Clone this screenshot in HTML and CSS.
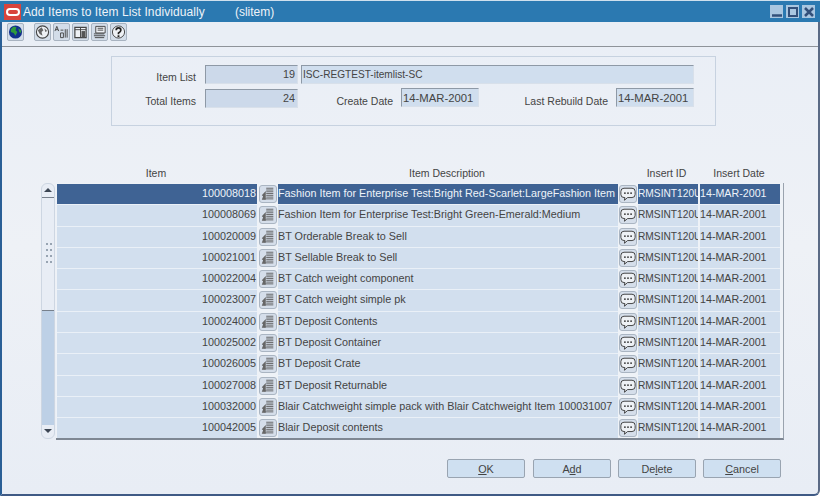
FILE: index.html
```html
<!DOCTYPE html>
<html lang="en">

<head>
  <meta charset="UTF-8">
  <title>Add Items to Item List Individually</title>
  <link rel="stylesheet" href="styles.css">
</head>

<body>
  <svg class="defs" width="0" height="0">
    <symbol id="i-detail" viewBox="0 0 18 18">
      <path d="M7 2.500h8M7 4.500h8M7 6.500h8M7 8.500h8M7 10.500h8M7 12.500h8M4 14.500h11" stroke="#5a5a5a" stroke-width="1" fill="none"/>
      <path d="M6.500 5.500L2 10.500l1.500 1L2 15.500h4.500z" fill="#666"/>
    </symbol>
    <symbol id="i-chat" viewBox="0 0 18 18">
      <path d="M4.500 2.500h9q3.500 0 3.500 3.500v3.500q0 3.500-3.500 3.500H8.500l-3.500 3 .5-3h-1Q1 13 1 9.500V6q0-3.500 3.500-3.500z" fill="#eef1f5" stroke="#333" stroke-width="1"/>
      <path d="M4.500 8h2M8 8h2M11.500 8h2" stroke="#222" stroke-width="1.600"/>
    </symbol>
  </svg>

  <div class="window">
    <div class="titlebar">
      <span class="oracle"><span class="oracle-ring"></span></span>
      <span class="title-text">Add Items to Item List Individually</span>
      <span class="title-sub">(slitem)</span>
      <div class="win-buttons">
        <span class="win-btn"><svg width="12" height="12" viewBox="0 0 12 12"><path d="M1 9.500h10" stroke="#33507a" stroke-width="2.500"/></svg></span>
        <span class="win-btn"><svg width="12" height="12" viewBox="0 0 12 12"><path d="M2 2h8v8H2z" fill="none" stroke="#33507a" stroke-width="2"/></svg></span>
        <span class="win-btn"><svg width="12" height="12" viewBox="0 0 12 12"><path d="M2 2l8 8M10 2l-8 8" stroke="#33507a" stroke-width="2.500"/></svg></span>
      </div>
    </div>

    <div class="toolbar">
      <span class="tool tool-first">
        <svg width="16" height="16" viewBox="0 0 16 16"><circle cx="8" cy="8" r="7" fill="#12308c"/><path d="M3 5l3-3 3 1-1 3 2 2-2 4-2-3-3-1zM11 4l3 2v3l-2-1z" fill="#2f9a3c"/></svg>
      </span>
      <span class="tool">
        <svg width="16" height="16" viewBox="0 0 16 16"><circle cx="8" cy="8" r="6.500" fill="#eef1f5" stroke="#444" stroke-width="1.200"/><path d="M3 6l4-3 2 3-2 2 1 4-3-2zM10 4l3 3-2 1z" fill="#666"/></svg>
      </span>
      <span class="tool">
        <svg width="16" height="16" viewBox="0 0 16 16"><path d="M1 7l2-5 2 5M1.800 5.500h2.400" stroke="#444" fill="none"/><path d="M7 9h3v5H7zM12 5v9M14 5v9M7 6h3" stroke="#444" fill="none"/></svg>
      </span>
      <span class="tool">
        <svg width="16" height="16" viewBox="0 0 16 16"><path d="M2 3h12v11H2z" fill="#eef1f5" stroke="#444" stroke-width="1.300"/><path d="M2 5.500h12M8 3v11" stroke="#444"/><path d="M9 7h4v7H9z" fill="#555"/></svg>
      </span>
      <span class="tool">
        <svg width="16" height="16" viewBox="0 0 16 16"><path d="M4 2h10v7H4z" fill="#eef1f5" stroke="#444"/><path d="M6 4h6M6 6h6M2 10h11M2 12h12M3 14h10" stroke="#444"/></svg>
      </span>
      <span class="tool">
        <svg width="16" height="16" viewBox="0 0 16 16"><circle cx="8" cy="8" r="6.500" fill="#eef1f5" stroke="#444"/><path d="M5.500 6q0-2.500 2.500-2.500T10.500 6Q10.500 7.500 8 9v1.500" fill="none" stroke="#222" stroke-width="1.800"/><path d="M7 11.500h2v2H7z" fill="#222"/></svg>
      </span>
    </div>

    <div class="content">
      <div class="panel">
        <div class="form-row">
          <label class="label label-first">Item List</label>
          <span class="field field-num">19</span>
          <span class="field field-name">ISC-REGTEST-itemlist-SC</span>
        </div>
        <div class="form-row form-row-second">
          <label class="label label-first">Total Items</label>
          <span class="field field-num">24</span>
          <label class="label label-create">Create Date</label>
          <span class="field field-date">14-MAR-2001</span>
          <label class="label label-rebuild">Last Rebuild Date</label>
          <span class="field field-date">14-MAR-2001</span>
        </div>
      </div>

      <div class="col-heads">
        <span class="head-item">Item</span>
        <span class="head-desc">Item Description</span>
        <span class="head-id">Insert ID</span>
        <span class="head-date">Insert Date</span>
      </div>

      <div class="table-area">
        <div class="scrollbar">
          <span class="scroll-btn scroll-up"></span>
          <div class="scroll-track">
            <span class="grip"></span>
          </div>
          <div class="scroll-thumb"></div>
          <span class="scroll-btn scroll-down"></span>
        </div>

        <div class="table">
          <div class="row selected">
            <span class="cell num">100008018</span>
            <span class="icon-btn"><svg><use href="#i-detail"/></svg></span>
            <span class="cell desc">Fashion Item for Enterprise Test:Bright Red-Scarlet:LargeFashion Item</span>
            <span class="icon-btn"><svg><use href="#i-chat"/></svg></span>
            <span class="cell id">RMSINT120U</span>
            <span class="cell date">14-MAR-2001</span>
          </div>
          <div class="row">
            <span class="cell num">100008069</span>
            <span class="icon-btn"><svg><use href="#i-detail"/></svg></span>
            <span class="cell desc">Fashion Item for Enterprise Test:Bright Green-Emerald:Medium</span>
            <span class="icon-btn"><svg><use href="#i-chat"/></svg></span>
            <span class="cell id">RMSINT120U</span>
            <span class="cell date">14-MAR-2001</span>
          </div>
          <div class="row">
            <span class="cell num">100020009</span>
            <span class="icon-btn"><svg><use href="#i-detail"/></svg></span>
            <span class="cell desc">BT Orderable Break to Sell</span>
            <span class="icon-btn"><svg><use href="#i-chat"/></svg></span>
            <span class="cell id">RMSINT120U</span>
            <span class="cell date">14-MAR-2001</span>
          </div>
          <div class="row">
            <span class="cell num">100021001</span>
            <span class="icon-btn"><svg><use href="#i-detail"/></svg></span>
            <span class="cell desc">BT Sellable Break to Sell</span>
            <span class="icon-btn"><svg><use href="#i-chat"/></svg></span>
            <span class="cell id">RMSINT120U</span>
            <span class="cell date">14-MAR-2001</span>
          </div>
          <div class="row">
            <span class="cell num">100022004</span>
            <span class="icon-btn"><svg><use href="#i-detail"/></svg></span>
            <span class="cell desc">BT Catch weight component</span>
            <span class="icon-btn"><svg><use href="#i-chat"/></svg></span>
            <span class="cell id">RMSINT120U</span>
            <span class="cell date">14-MAR-2001</span>
          </div>
          <div class="row">
            <span class="cell num">100023007</span>
            <span class="icon-btn"><svg><use href="#i-detail"/></svg></span>
            <span class="cell desc">BT Catch weight simple pk</span>
            <span class="icon-btn"><svg><use href="#i-chat"/></svg></span>
            <span class="cell id">RMSINT120U</span>
            <span class="cell date">14-MAR-2001</span>
          </div>
          <div class="row">
            <span class="cell num">100024000</span>
            <span class="icon-btn"><svg><use href="#i-detail"/></svg></span>
            <span class="cell desc">BT Deposit Contents</span>
            <span class="icon-btn"><svg><use href="#i-chat"/></svg></span>
            <span class="cell id">RMSINT120U</span>
            <span class="cell date">14-MAR-2001</span>
          </div>
          <div class="row">
            <span class="cell num">100025002</span>
            <span class="icon-btn"><svg><use href="#i-detail"/></svg></span>
            <span class="cell desc">BT Deposit Container</span>
            <span class="icon-btn"><svg><use href="#i-chat"/></svg></span>
            <span class="cell id">RMSINT120U</span>
            <span class="cell date">14-MAR-2001</span>
          </div>
          <div class="row">
            <span class="cell num">100026005</span>
            <span class="icon-btn"><svg><use href="#i-detail"/></svg></span>
            <span class="cell desc">BT Deposit Crate</span>
            <span class="icon-btn"><svg><use href="#i-chat"/></svg></span>
            <span class="cell id">RMSINT120U</span>
            <span class="cell date">14-MAR-2001</span>
          </div>
          <div class="row">
            <span class="cell num">100027008</span>
            <span class="icon-btn"><svg><use href="#i-detail"/></svg></span>
            <span class="cell desc">BT Deposit Returnable</span>
            <span class="icon-btn"><svg><use href="#i-chat"/></svg></span>
            <span class="cell id">RMSINT120U</span>
            <span class="cell date">14-MAR-2001</span>
          </div>
          <div class="row">
            <span class="cell num">100032000</span>
            <span class="icon-btn"><svg><use href="#i-detail"/></svg></span>
            <span class="cell desc">Blair Catchweight simple pack with Blair Catchweight Item 100031007</span>
            <span class="icon-btn"><svg><use href="#i-chat"/></svg></span>
            <span class="cell id">RMSINT120U</span>
            <span class="cell date">14-MAR-2001</span>
          </div>
          <div class="row">
            <span class="cell num">100042005</span>
            <span class="icon-btn"><svg><use href="#i-detail"/></svg></span>
            <span class="cell desc">Blair Deposit contents</span>
            <span class="icon-btn"><svg><use href="#i-chat"/></svg></span>
            <span class="cell id">RMSINT120U</span>
            <span class="cell date">14-MAR-2001</span>
          </div>
        </div>
      </div>

      <div class="buttons">
        <button class="btn"><u>O</u>K</button>
        <button class="btn">A<u>d</u>d</button>
        <button class="btn">De<u>l</u>ete</button>
        <button class="btn"><u>C</u>ancel</button>
      </div>
    </div>
  </div>
</body>

</html>
```

FILE: styles.css
```css
html,
body {
  margin: 0;
  padding: 0;
}

body {
  width: 820px;
  height: 497px;
  overflow: hidden;
  background-color: #fff;
  font-family: "Liberation Sans", Arial, sans-serif;
  font-size: 10.800px;
  color: #444;
}

.defs {
  position: absolute;
}

.window {
  box-sizing: border-box;
  width: 820px;
  height: 496px;
  border-left: 2px solid #2a5f96;
  border-right: 2px solid #5a6a85;
  border-bottom: 2px solid #3f5a85;
  border-bottom-right-radius: 6px;
  display: flex;
  flex-direction: column;
  background: linear-gradient(#e9eef6, #eef1f6 50%, #e8edf5);
}

/* title bar */
.titlebar {
  height: 22px;
  flex: none;
  display: flex;
  align-items: center;
  margin-left: -2px;
  margin-right: -2px;
  border-top: 1px solid #cfe0ee;
  box-sizing: border-box;
  background-color: #2b79b1;
  color: #eef3f8;
  font-size: 12px;
}

.oracle {
  width: 17px;
  height: 16px;
  margin-left: 4px;
  background-color: #d8443c;
  display: flex;
  align-items: center;
  justify-content: center;
}

.oracle-ring {
  width: 10px;
  height: 4px;
  border: 2px solid #fff;
  border-radius: 4px;
}

.title-text {
  margin-left: 2px;
  letter-spacing: 0.090px;
}

.title-sub {
  margin-left: 30px;
}

.win-buttons {
  margin-left: auto;
  margin-right: 5px;
  display: flex;
  gap: 3px;
}

.win-btn {
  width: 13px;
  height: 13px;
  background-color: #a9c6e0;
  display: flex;
  align-items: center;
  justify-content: center;
}

/* toolbar */
.toolbar {
  height: 25px;
  flex: none;
  box-sizing: border-box;
  display: flex;
  align-items: flex-start;
  padding: 1px 0 0 5px;
  gap: 2px;
  background-color: #e9eef5;
  border-bottom: 1px solid #8e9399;
}

.tool {
  width: 17px;
  height: 18px;
  box-sizing: border-box;
  border: 1px solid #a8b3c0;
  border-radius: 2px;
  background-color: #d3dde9;
  display: flex;
  align-items: center;
  justify-content: center;
}

.tool-first {
  margin-right: 8px;
}

/* form panel */
.content {
  flex: 1;
  display: flex;
  flex-direction: column;
}

.panel {
  box-sizing: border-box;
  width: 605px;
  height: 70px;
  margin: 9px 0 0 109px;
  padding-top: 8px;
  border: 1px solid #c7d2e0;
  flex: none;
}

.form-row {
  display: flex;
  align-items: flex-start;
}

.form-row-second {
  margin-top: 5px;
}

.label {
  font-size: 10.500px;
  text-align: right;
  padding-top: 6px;
  flex: none;
}

.label-first {
  width: 84px;
  margin-right: 9px;
}

.label-create {
  width: 80px;
  margin-right: 8px;
  margin-left: 15px;
}

.label-rebuild {
  width: 125px;
  margin-right: 8px;
  margin-left: 4px;
}

.field {
  box-sizing: border-box;
  height: 19px;
  line-height: 15px;
  padding: 1px 2px;
  flex: none;
  background-color: #d0deee;
  border: 1px solid #d8e0ea;
  border-top-color: #8e99a6;
  border-left-color: #8e99a6;
}

.field-num {
  width: 93px;
  text-align: right;
  background-color: #ccd9ea;
}

.field-name {
  width: 393px;
  margin-left: 3px;
  padding-left: 1px;
  font-size: 10.100px;
}

.field-date {
  width: 78px;
  margin-top: -1px;
  padding: 2px 0 0 1px;
  font-size: 11.300px;
}

/* table */
.col-heads {
  display: grid;
  grid-template-columns: 200px 19px 342px 20px 60px 82px;
  margin: 40px 0 0 53px;
  height: 17px;
  flex: none;
  font-size: 10.500px;
  line-height: 14px;
  text-align: center;
}

.head-item {
  grid-column: 1;
  padding-left: 2px;
}

.head-desc {
  grid-column: 2 / 4;
  padding-left: 23px;
}

.head-id {
  grid-column: 4 / 6;
  padding-left: 21px;
}

.head-date {
  grid-column: 6;
  padding-left: 4px;
}

.table-area {
  display: flex;
  align-items: flex-start;
  margin-left: 39px;
  flex: none;
}

.scrollbar {
  position: relative;
  box-sizing: border-box;
  width: 14px;
  height: 256px;
  margin-right: 1px;
  border: 1px solid #cdd6e2;
  border-radius: 6px;
  background-color: #e8edf5;
  display: flex;
  flex-direction: column;
}

.scroll-btn {
  flex: none;
  height: 13px;
  position: relative;
}

.scroll-up {
  border-bottom: 1px solid #77808c;
}

.scroll-up::after,
.scroll-down::after {
  content: "";
  position: absolute;
  left: 2px;
  top: 4px;
  border-left: 4px solid transparent;
  border-right: 4px solid transparent;
}

.scroll-up::after {
  border-bottom: 4px solid #3c4654;
}

.scroll-down::after {
  border-top: 4px solid #3c4654;
}

.scroll-track {
  flex: 1;
  position: relative;
}

.grip {
  position: absolute;
  left: 3px;
  top: 43px;
  width: 8px;
  height: 25px;
  background-image: radial-gradient(#98a4b2 0.8px, transparent 1.1px);
  background-size: 4px 6px;
}

.scroll-thumb {
  flex: none;
  height: 115px;
  background-color: #bdd0e6;
  border-top: 1px solid #77808c;
  box-sizing: border-box;
}

.table {
  box-sizing: border-box;
  width: 728px;
  height: 257px;
  padding: 1px 3px 0 1px;
  overflow: hidden;
  border-right: 1px solid #9aa3ae;
  border-bottom: 2px solid #7e8793;
  background-color: #eef2f7;
  display: grid;
  grid-auto-rows: 21.300px;
}

.row {
  display: grid;
  grid-template-columns: 200px 21px 340px 20px 62px 80px;
  align-items: stretch;
}

.cell {
  line-height: 18px;
  white-space: nowrap;
  overflow: hidden;
  background-color: #d2dfee;
  border-bottom: 1px solid #eaf0f7;
}

.num {
  text-align: right;
  padding-right: 1px;
}

.id {
  margin-right: 2px;
  font-size: 10.200px;
  line-height: 19px;
}

.date {
  font-size: 10.700px;
}

.selected .cell {
  background-color: #3f6394;
  color: #eef3f9;
}

.icon-btn {
  display: flex;
  align-items: flex-start;
  justify-content: center;
  padding-top: 1px;
}

.icon-btn svg {
  box-sizing: border-box;
  width: 18px;
  height: 18px;
  border: 1px solid #aab5c2;
  border-radius: 3px;
  background-color: #d5deea;
}

/* dialog buttons */
.buttons {
  display: flex;
  gap: 7px;
  margin: 19px 0 0 445px;
}

.btn {
  box-sizing: border-box;
  width: 78px;
  height: 19px;
  padding: 0;
  font: inherit;
  color: #444;
  background-color: #cfe0f1;
  border: 1px solid #99a4b1;
  border-radius: 2px;
}

.btn:first-child {
  margin-right: 1px;
}
```
